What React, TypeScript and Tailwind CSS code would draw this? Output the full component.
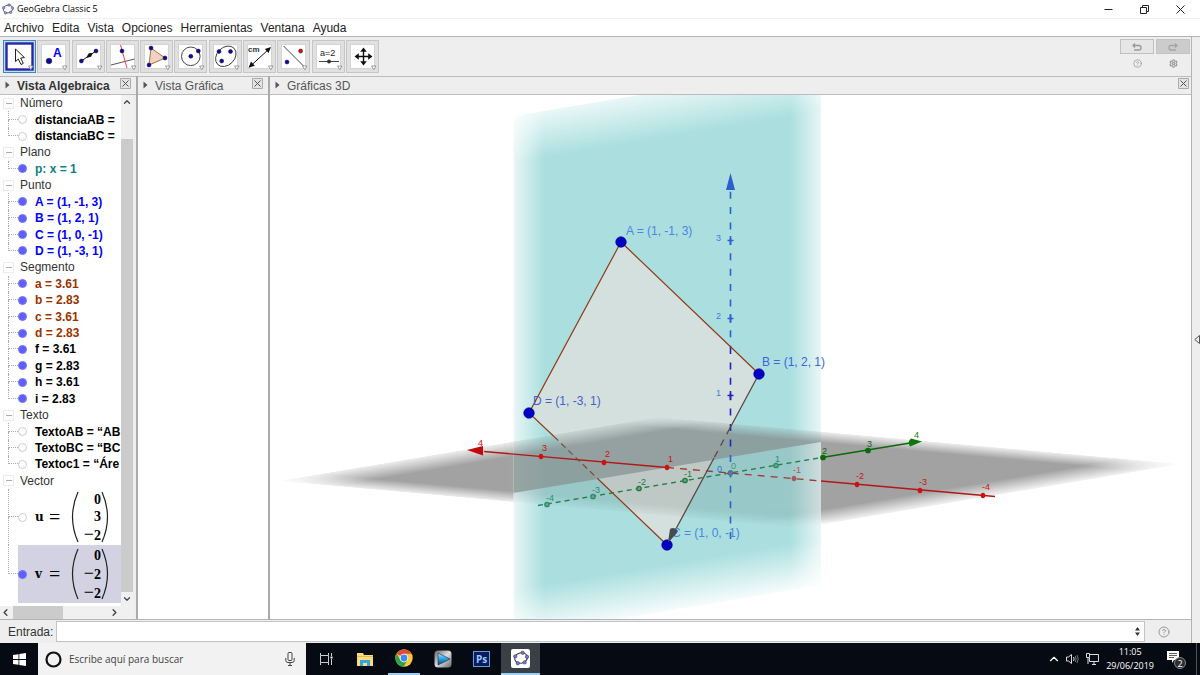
import React from 'react';
import { ChevronDown, ChevronLeft, ChevronRight, ChevronUp, CircleHelp, Settings } from 'lucide-react';

type Item = { text: string; color: string; visible: boolean };
type Group = { name: string; items: Item[] };

const GROUPS: Group[] = [
  {
    name: 'Número',
    items: [
      { text: 'distanciaAB =', color: 'text-black', visible: false },
      { text: 'distanciaBC =', color: 'text-black', visible: false },
    ],
  },
  { name: 'Plano', items: [{ text: 'p: x = 1', color: 'text-[#0c8080]', visible: true }] },
  {
    name: 'Punto',
    items: [
      { text: 'A = (1, -1, 3)', color: 'text-[#0000ff]', visible: true },
      { text: 'B = (1, 2, 1)', color: 'text-[#0000ff]', visible: true },
      { text: 'C = (1, 0, -1)', color: 'text-[#0000ff]', visible: true },
      { text: 'D = (1, -3, 1)', color: 'text-[#0000ff]', visible: true },
    ],
  },
  {
    name: 'Segmento',
    items: [
      { text: 'a = 3.61', color: 'text-[#993300]', visible: true },
      { text: 'b = 2.83', color: 'text-[#993300]', visible: true },
      { text: 'c = 3.61', color: 'text-[#993300]', visible: true },
      { text: 'd = 2.83', color: 'text-[#993300]', visible: true },
      { text: 'f = 3.61', color: 'text-black', visible: true },
      { text: 'g = 2.83', color: 'text-black', visible: true },
      { text: 'h = 3.61', color: 'text-black', visible: true },
      { text: 'i = 2.83', color: 'text-black', visible: true },
    ],
  },
  {
    name: 'Texto',
    items: [
      { text: 'TextoAB = “AB', color: 'text-black', visible: false },
      { text: 'TextoBC = “BC', color: 'text-black', visible: false },
      { text: 'Textoc1 = “Áre', color: 'text-black', visible: false },
    ],
  },
  { name: 'Vector', items: [] },
];

const MENU = ['Archivo', 'Edita', 'Vista', 'Opciones', 'Herramientas', 'Ventana', 'Ayuda'];

const Dot = ({ x, y, color = '#0a0aa8' }: { x: number; y: number; color?: string }) => (
  <circle cx={x} cy={y} r="2" fill={color} stroke="#111" strokeWidth="0.5" />
);

const TOOLS: { name: string; icon: React.ReactNode }[] = [
  {
    name: 'Elige y mueve',
    icon: <path d="M12.5 9 V21.5 L15.3 19 L18 24.5 L20.3 23.4 L17.7 18 L21.5 17.6 Z" fill="#fff" stroke="#222" />,
  },
  {
    name: 'Punto',
    icon: (
      <>
        <circle cx="12" cy="21" r="2.8" fill="#0a0aa8" stroke="#111" strokeWidth="0.5" />
        <text x="16" y="17" fontSize="12" fontWeight="bold" fill="#0000ff">A</text>
      </>
    ),
  },
  {
    name: 'Segmento',
    icon: (
      <>
        <path d="M9.4 21 L24 11" stroke="#111" />
        <path d="M21 13 L16.8 13.2 L14 18 L19 16.8 Z" fill="#111" />
        <Dot x={9.4} y={21} />
        <Dot x={24} y={11} />
      </>
    ),
  },
  {
    name: 'Perpendicular',
    icon: (
      <>
        <path d="M5 25 L28.5 19" stroke="#555" />
        <path d="M14.5 5 L21 28" stroke="#ff4040" />
        <Dot x={16} y={11} />
      </>
    ),
  },
  {
    name: 'Polígono',
    icon: (
      <>
        <path d="M11 8 L25 18 L9 25 Z" fill="#f0d2c2" stroke="#b0694c" />
        <Dot x={11} y={8} />
        <Dot x={25} y={18} />
        <Dot x={9} y={25} />
      </>
    ),
  },
  {
    name: 'Circunferencia',
    icon: (
      <>
        <circle cx="16.8" cy="16.3" r="9.3" fill="none" stroke="#333" strokeWidth="0.9" />
        <Dot x={16.8} y={16.3} />
        <Dot x={24.3} y={11} />
      </>
    ),
  },
  {
    name: 'Elipse',
    icon: (
      <>
        <ellipse cx="16.8" cy="16.3" rx="11.5" ry="8.8" transform="rotate(-45 16.8 16.3)" fill="none" stroke="#333" strokeWidth="0.9" />
        <Dot x={10} y={11.5} />
        <Dot x={21.5} y={11.5} />
        <Dot x={12.7} y={21} />
      </>
    ),
  },
  {
    name: 'Distancia',
    icon: (
      <>
        <path d="M8 25.5 L26 9" stroke="#111" />
        <path d="M5.5 27.8 L8 21.5 L11.8 25.7 Z M28 7 L25.5 13 L21.8 9 Z" fill="#111" />
        <text x="5" y="12" fontSize="8" fontWeight="bold" fill="#333">cm</text>
      </>
    ),
  },
  {
    name: 'Simetría',
    icon: (
      <>
        <path d="M6.5 6 L28.5 28" stroke="#444" />
        <Dot x={10} y={22} />
        <Dot x={23.6} y={11} color="#e01010" />
      </>
    ),
  },
  {
    name: 'Deslizador',
    icon: (
      <>
        <text x="8" y="16" fontSize="9" fill="#222">a=2</text>
        <path d="M7 21.5 H27" stroke="#444" />
        <circle cx="17" cy="21.5" r="1.9" fill="#333" />
      </>
    ),
  },
  {
    name: 'Desplaza vista',
    icon: (
      <>
        <path d="M17.5 10 V23 M11 16.5 H24" stroke="#111" strokeWidth="1.4" />
        <path d="M17.5 7.5 L20.8 11.8 H14.2 Z M17.5 25.5 L20.8 21.2 H14.2 Z M8.5 16.5 L12.8 13.2 V19.8 Z M26.5 16.5 L22.2 13.2 V19.8 Z" fill="#111" />
      </>
    ),
  },
];

const GeoGebraMark = ({ className, dot }: { className: string; dot: string }) => (
  <svg viewBox="0 0 20 20" className={className} aria-hidden="true">
    <ellipse cx="10" cy="10" rx="8" ry="6.5" transform="rotate(-15 10 10)" fill="none" stroke="#444" strokeWidth="1.4" />
    {[[12, 3.5], [17.5, 8.5], [14.5, 15.5], [6, 16.5], [2.8, 8]].map(([x, y]) => (
      <circle key={x} cx={x} cy={y} r="2.1" fill={dot} stroke="#333" strokeWidth="0.7" />
    ))}
  </svg>
);

const TitleBar = () => (
  <header className="flex h-[18px] shrink-0 items-center bg-white pl-0.5">
    <GeoGebraMark className="h-3 w-3" dot="#9999ff" />
    <h1 className="ml-[3px] flex-1 font-['Open_Sans','Noto_Sans',sans-serif] text-[9px] text-black">GeoGebra Classic 5</h1>
    <button aria-label="Minimizar" className="flex w-9 justify-center">
      <svg width="9" height="9"><path d="M0.5 4.5 H8.5" stroke="#222" /></svg>
    </button>
    <button aria-label="Restaurar" className="flex w-9 justify-center">
      <svg width="9" height="9" fill="none" stroke="#222"><path d="M0.5 2.5 H6.5 V8.5 H0.5 Z M2.5 2 V0.5 H8.5 V6.5 H7" /></svg>
    </button>
    <button aria-label="Cerrar" className="mr-0.5 flex w-9 justify-center">
      <svg width="9" height="9"><path d="M0.5 0.5 L8.5 8.5 M8.5 0.5 L0.5 8.5" stroke="#222" /></svg>
    </button>
  </header>
);

const MenuBar = () => (
  <nav className="flex h-[18px] shrink-0 items-center gap-2 border-t border-[#f0f0f0] bg-white pl-1 text-[#222]">
    {MENU.map(m => (
      <button key={m} className="text-[12px] leading-4">{m}</button>
    ))}
  </nav>
);

const Toolbar = () => (
  <div className="flex h-10 shrink-0 items-center justify-between border-t border-[#b4b4b4] pl-[3px] pr-px">
    <div className="flex w-[376px] justify-between">
      {TOOLS.map((tool, i) => (
        <button
          key={tool.name}
          aria-label={tool.name}
          className={
            i === 0
              ? 'h-[33px] w-[33px] border border-[#3c86c4] bg-[#c4dcf0]'
              : 'h-[33px] w-[33px] border border-[#c6c6c6] bg-[#e0e0e0]'
          }
        >
          <svg viewBox="1 1 31 31" className="h-full w-full" fill="none">
            <rect x="4.5" y="4.5" width="24" height="24" fill="#fff" stroke={i === 0 ? 'none' : '#d4d4d4'} />
            {i === 0 && <rect x="3.5" y="3.5" width="26" height="26" fill="#fff" stroke="#2727a8" strokeWidth="2.4" />}
            {tool.icon}
            <path d="M25.5 26 H30 L27.8 29.8 Z" fill="#fff" stroke="#888" strokeWidth="0.8" />
          </svg>
        </button>
      ))}
    </div>
    <div className="grid grid-cols-2 gap-x-0.5 gap-y-px self-start pt-0.5">
      <button aria-label="Deshace" className="flex h-[15px] w-[34px] items-center justify-center border border-[#c0c0c0] bg-[#e6e6e6]">
        <svg width="10" height="8" fill="none" stroke="#999" strokeWidth="1.3"><path d="M3 0.5 L1 2.5 L3 4.5 M1 2.5 H7 Q9 2.5 9 4.7 Q9 7 7 7 H2" /></svg>
      </button>
      <button aria-label="Rehace" className="flex h-[15px] w-[34px] items-center justify-center border border-[#c4c4c4] bg-[#cccccc]">
        <svg width="10" height="8" fill="none" stroke="#a4a4a4" strokeWidth="1.3"><path d="M7 0.5 L9 2.5 L7 4.5 M9 2.5 H3 Q1 2.5 1 4.7 Q1 7 3 7 H8" /></svg>
      </button>
      <button aria-label="Ayuda" className="flex h-4 items-center justify-center text-[#999]"><CircleHelp size={9} /></button>
      <button aria-label="Preferencias" className="flex h-4 items-center justify-center text-[#999]"><Settings size={9} strokeWidth={3} /></button>
    </div>
  </div>
);

const PanelHeader = ({ title, bold, closeClass }: { title: string; bold?: boolean; closeClass: string }) => (
  <div className="flex h-[19px] shrink-0 items-center border-y border-[#bcbcbc] bg-[#eeeeee] pl-[5px]">
    <svg width="5" height="8" className="mb-0.5 mr-[7px]"><path d="M0.5 0.5 L4.5 4 L0.5 7.5 Z" fill="#555" /></svg>
    <h2 className={bold ? 'flex-1 whitespace-nowrap text-[12px] leading-4 font-bold text-[#333]' : 'flex-1 whitespace-nowrap text-[12px] leading-4 text-[#555]'}>{title}</h2>
    <button aria-label={`Cerrar ${title}`} className={closeClass}>
      <svg width="11" height="11" className="mb-1 block"><path d="M0.5 0.5 H10.5 V10.5 H0.5 Z" fill="#e4e4e4" stroke="#aaa" /><path d="M2.5 2.5 L8.5 8.5 M8.5 2.5 L2.5 8.5" stroke="#555" /></svg>
    </button>
  </div>
);

const Connector = ({ last }: { last: boolean }) => (
  <span className="ml-2 flex w-[10px] shrink-0 flex-col self-stretch">
    <span className="h-1/2 border-b border-l border-dotted border-[#aaa]" />
    <span className={last ? 'h-1/2' : 'h-1/2 border-l border-dotted border-[#aaa]'} />
  </span>
);

const Marker = ({ visible, name }: { visible: boolean; name: string }) => (
  <button
    aria-label={`Mostrar ${name}`}
    className={
      visible
        ? 'h-[9px] w-[9px] shrink-0 rounded-full border border-[#7777ee] bg-[#5f5fff]'
        : 'h-[9px] w-[9px] shrink-0 rounded-full border border-[#ccc] bg-white'
    }
  />
);

const Matrix = ({ values }: { values: number[] }) => (
  <span className="flex h-[52px] items-center">
    <svg width="8" height="52" fill="none" stroke="#222" strokeWidth="1.2"><path d="M7 1 Q-4 26 7 51" /></svg>
    <span className="flex w-[22px] flex-col text-right text-[14px] leading-[17px]">
      {values.map((v, i) => (
        <span key={i}>
          {v < 0 && <span className="text-[18px] leading-none font-normal">−</span>}
          {Math.abs(v)}
        </span>
      ))}
    </span>
    <svg width="8" height="52" fill="none" stroke="#222" strokeWidth="1.2"><path d="M1 1 Q12 26 1 51" /></svg>
  </span>
);

const VectorRow = ({ name, values, visible, last }: { name: string; values: number[]; visible: boolean; last: boolean }) => (
  <li className={last ? 'flex h-[58px] items-center' : 'flex h-14 items-center'}>
    <Connector last={last} />
    <span className={last ? 'flex h-full flex-1 items-center bg-[#d2d2e2]' : 'flex h-full flex-1 items-center'}>
      <Marker visible={visible} name={name} />
      <span className="ml-2 flex items-center text-[12px] font-bold text-black">
        <span className="w-3.5 font-['DejaVu_Serif','Liberation_Serif',serif]">{name}</span>
        <span className="w-[22px] font-['Liberation_Serif',serif] text-[20px] leading-4 font-normal">=</span>
        <span className="font-['Liberation_Serif',serif]"><Matrix values={values} /></span>
      </span>
    </span>
  </li>
);

const AlgebraView = () => (
  <section className="flex w-[138px] shrink-0 flex-col border-r-2 border-[#aaaaaa] bg-white">
    <PanelHeader title="Vista Algebraica" bold closeClass="mr-[5px]" />
    <div className="flex min-h-0 flex-1 border-r-3 border-[#eeeeee]">
      <div className="flex min-w-0 flex-1 flex-col">
        <div className="min-h-0 flex-1 overflow-hidden">
          <ul className="grid h-[394px] auto-rows-fr">
            {GROUPS.map(group => (
              <React.Fragment key={group.name}>
                <li className="flex items-center pl-[3px] text-[12px] leading-4 text-[#333]">
                  <button aria-label={`Plegar ${group.name}`} className="flex h-[11px] w-[11px] items-center justify-center border border-[#ececec] bg-white">
                    <span className="h-px w-1.5 bg-[#aaa]" />
                  </button>
                  <span className="ml-1.5">{group.name}</span>
                </li>
                {group.items.map((item, i) => (
                  <li key={item.text} className="flex items-center">
                    <Connector last={i === group.items.length - 1} />
                    <Marker visible={item.visible} name={item.text} />
                    <span className={`ml-2 whitespace-nowrap text-[12px] font-bold leading-4 ${item.color}`}>{item.text}</span>
                  </li>
                ))}
              </React.Fragment>
            ))}
          </ul>
          <ul>
            <VectorRow name="u" values={[0, 3, -2]} visible={false} last={false} />
            <VectorRow name="v" values={[0, -2, -2]} visible last />
          </ul>
        </div>
        <div className="flex h-[13px] shrink-0 items-center bg-[#f0f0f0] text-[#444]">
          <ChevronLeft size={11} strokeWidth={3} className="mr-0.5" />
          <div className="h-full w-[50px] bg-[#cbcbcb]" />
          <ChevronRight size={11} strokeWidth={3} className="ml-auto mr-px" />
        </div>
      </div>
      <div className="flex w-3 shrink-0 flex-col items-center bg-[#f0f0f0] pb-[13px] text-[#444]">
        <ChevronUp size={10} strokeWidth={3} className="my-0.5" />
        <div className="mt-[30px] w-full flex-1 bg-[#cbcbcb]" />
        <ChevronDown size={10} strokeWidth={3} className="my-0.5" />
      </div>
    </div>
  </section>
);

const GraphicsView = () => (
  <section className="flex w-[132px] shrink-0 flex-col border-r-2 border-[#aaaaaa] bg-white">
    <PanelHeader title="Vista Gráfica" closeClass="mr-[5px]" />
  </section>
);

const POINTS = [
  { label: 'A = (1, -1, 3)', x: 621, y: 242, lx: 626, ly: 235, color: '#4a86e0' },
  { label: 'B = (1, 2, 1)', x: 759, y: 374, lx: 762, ly: 366, color: '#3f63e0' },
  { label: 'C = (1, 0, -1)', x: 667, y: 545, lx: 672, ly: 537, color: '#4a86e0' },
  { label: 'D = (1, -3, 1)', x: 529, y: 413, lx: 533, ly: 405, color: '#4a5ccc' },
];

const X_TICKS = [
  { label: '3', x: 541, y: 456, color: '#cc1111' },
  { label: '2', x: 604, y: 462, color: '#cc1111' },
  { label: '1', x: 667, y: 467, color: '#cc1111' },
  { label: '-1', x: 794, y: 478, color: '#a85a5a' },
  { label: '-2', x: 857, y: 484, color: '#cc1111' },
  { label: '-3', x: 920, y: 490, color: '#cc1111' },
  { label: '-4', x: 983, y: 495, color: '#cc1111' },
];

const Y_TICKS = [
  { label: '-4', x: 547, y: 504, color: '#2a8f68' },
  { label: '-3', x: 593, y: 496, color: '#2a8f68' },
  { label: '-2', x: 639, y: 488, color: '#1f7a3c' },
  { label: '-1', x: 685, y: 480, color: '#1f7a3c' },
  { label: '1', x: 776, y: 465, color: '#2a8f68' },
  { label: '2', x: 823, y: 457, color: '#0a6a0a' },
  { label: '3', x: 868, y: 450, color: '#0a6a0a' },
];

const Z_TICKS = [
  { label: '3', y: 240, color: '#2a62cc' },
  { label: '2', y: 318, color: '#2a62cc' },
  { label: '1', y: 395, color: '#2222c0' },
];

// the floor is shaded apart in each region that the wall cuts out of it
const FLOOR_PARTS = [
  { clip: 'url(#outside)', color: '#868686', opacity: 0.76 },
  { clip: 'url(#behind)', color: '#879393', opacity: 0.82 },
  { clip: 'url(#front)', color: '#000000', opacity: 0.1 },
];

const Scene = () => (
  <svg viewBox="270 95 921 524" preserveAspectRatio="xMidYMid slice" className="h-full w-full" fill="none" role="img" aria-label="Gráficas 3D">
    <defs>
      <linearGradient id="fadeX">
        <stop offset="0" stopColor="#fff" stopOpacity="0.28" />
        <stop offset="0.1" stopColor="#fff" />
        <stop offset="0.9" stopColor="#fff" />
        <stop offset="1" stopColor="#fff" stopOpacity="0.28" />
      </linearGradient>
      <linearGradient id="fadeY" x2="0" y2="1">
        <stop offset="0" stopColor="#abdfdf" stopOpacity="0.25" />
        <stop offset="0.09" stopColor="#abdfdf" />
        <stop offset="0.91" stopColor="#abdfdf" />
        <stop offset="1" stopColor="#abdfdf" stopOpacity="0.1" />
      </linearGradient>
      <linearGradient id="floorX">
        <stop offset="0" stopColor="#fff" stopOpacity="0.18" />
        <stop offset="0.11" stopColor="#fff" />
        <stop offset="0.89" stopColor="#fff" />
        <stop offset="1" stopColor="#fff" stopOpacity="0.18" />
      </linearGradient>
      <linearGradient id="floorY" x2="0" y2="1">
        <stop offset="0" stopColor="#fff" stopOpacity="0.18" />
        <stop offset="0.11" stopColor="#fff" />
        <stop offset="0.89" stopColor="#fff" />
        <stop offset="1" stopColor="#fff" stopOpacity="0.12" />
      </linearGradient>
      <mask id="wallMask" maskContentUnits="objectBoundingBox">
        <rect width="1" height="1" fill="url(#fadeX)" />
      </mask>
      <mask id="floorMaskX" maskContentUnits="objectBoundingBox">
        <rect width="1" height="1" fill="url(#floorX)" />
      </mask>
      <mask id="floorMaskY" maskContentUnits="objectBoundingBox">
        <rect width="1" height="1" fill="url(#floorY)" />
      </mask>
      <clipPath id="outside">
        <path d="M270 95 H513.5 V619 H270 Z M821 95 H1191 V619 H821 Z" />
      </clipPath>
      <clipPath id="behind">
        <path d="M513.5 95 H821 V442 L513.5 493 Z" />
      </clipPath>
      <clipPath id="front">
        <path d="M821 442 L513.5 493 V619 H821 Z" />
      </clipPath>
    </defs>

    {/* plane x = 1 and the parallelogram lying in it */}
    <g transform="matrix(1 -0.168 0 1 513.5 116)">
      <rect width="307.5" height="521" fill="url(#fadeY)" mask="url(#wallMask)" />
    </g>
    <path d="M621 242 L759 374 L667 545 L529 413 Z" fill="#d4e0dd" />

    {/* plane xOy */}
    {FLOOR_PARTS.map(part => (
      <g key={part.clip} clipPath={part.clip} opacity={part.opacity}>
        <g transform="matrix(3.8 -0.64 5.24 0.47 278 481)">
          <g mask="url(#floorMaskY)">
            <rect width="100" height="100" fill={part.color} mask="url(#floorMaskX)" />
          </g>
        </g>
      </g>
    ))}

    {/* z axis */}
    <path d="M730.5 191.7 V347" stroke="#2a62cc" strokeWidth="1.6" strokeDasharray="7 8.4" />
    <path d="M730.5 347 V451" stroke="#2222c0" strokeWidth="1.6" strokeDasharray="7 8.4" />
    <path d="M730.5 455 V540" stroke="#2a62cc" strokeWidth="1.6" strokeDasharray="7 8.4" />
    <path d="M730.5 173 L735 190 H726 Z" fill="#2a5fcc" />
    {Z_TICKS.map(t => (
      <g key={t.label}>
        <path d={`M727.5 ${t.y + 0.5} h6 M730.5 ${t.y - 4} v9`} stroke={t.color} strokeWidth="1.6" />
        <text x="716" y={t.y + 1} fontSize="9" fill="#4a78e0">{t.label}</text>
      </g>
    ))}

    {/* x axis */}
    <path d="M484 451.5 L667 467.5" stroke="#b01818" strokeWidth="1.3" />
    <path d="M667 467.5 L821 481" stroke="#a03838" strokeWidth="1.3" strokeDasharray="7 6" />
    <path d="M821 481 L995 496.5" stroke="#b01818" strokeWidth="1.3" />
    <path d="M467 450 L483 446 V455.5 Z" fill="#c00808" />
    <text x="478" y="446" fontSize="9" fill="#cc1111">4</text>
    {X_TICKS.map(t => (
      <g key={t.label}>
        <ellipse cx={t.x} cy={t.y + 0.5} rx="2.3" ry="2.8" fill={t.color} />
        <text x={t.label.length > 1 ? t.x - 1 : t.x + 1} y={t.y - 5} fontSize="9" fill={t.color}>{t.label}</text>
      </g>
    ))}

    {/* y axis */}
    <path d="M538 505.5 L822 457.5" stroke="#24804a" strokeWidth="1.3" strokeDasharray="5 4" />
    <path d="M822 457.5 L910 443" stroke="#0a6a0a" strokeWidth="1.3" />
    <path d="M922 441.5 L911 438.5 Q907 442 910 446.5 Z" fill="#087808" />
    <text x="914" y="438" fontSize="9" fill="#1a7a1a">4</text>
    {Y_TICKS.map(t => (
      <g key={t.label}>
        <circle cx={t.x} cy={t.y + 0.5} r="2.2" fill={t.x > 800 ? t.color : '#6aa08c'} stroke={t.color} strokeWidth="1.3" />
        <text x={t.x - 1} y={t.y - 3} fontSize="9" fill={t.color}>{t.label}</text>
      </g>
    ))}
    <circle cx="730.5" cy="473" r="2.4" fill="#7a7090" stroke="#3a6aa0" />
    <text x="717" y="472" fontSize="9" fill="#3a70dd">0</text>
    <text x="731" y="469" fontSize="9" fill="#4a9080">0</text>

    {/* sides of the parallelogram */}
    <path d="M621 242 L759 374 M621 242 L529 413 L554 436.5 M598 479 L667 545" stroke="#8f3c18" strokeWidth="1.2" />
    <path d="M554 436.5 L598 479" stroke="#7c4c38" strokeWidth="1.2" strokeDasharray="6 4" />
    <path d="M759 374 L730 428 M714 458 L670 540" stroke="#5c4844" strokeWidth="1.3" />
    <path d="M730 428 L714 458" stroke="#5c4844" strokeWidth="1.3" strokeDasharray="7 6" />

    {POINTS.map(p => (
      <g key={p.label}>
        <circle cx={p.x} cy={p.y} r="5.3" fill="#0000c4" stroke="#000090" strokeWidth="0.6" />
        <text x={p.lx} y={p.ly} fontSize="12" fill={p.color}>{p.label}</text>
      </g>
    ))}
    <path d="M668 542 L670 529 Q674 526 678 531 Q677 534 668 542 Z" fill="#464c50" />
  </svg>
);

const View3D = () => (
  <section className="flex min-w-0 flex-1 flex-col bg-white">
    <PanelHeader title="Gráficas 3D" closeClass="mr-0.5" />
    <div className="min-h-0 flex-1 overflow-hidden">
      <Scene />
    </div>
  </section>
);

const InputBar = () => (
  <form className="flex h-6 shrink-0 items-center border-t border-[#b4b4b4] bg-[#eeeeee] pl-2">
    <label htmlFor="entrada" className="w-12 text-[12px] text-[#333]">Entrada:</label>
    <div className="flex h-[21px] min-w-0 flex-1 items-center border border-[#c0c4cc] bg-white pr-1">
      <input id="entrada" type="text" className="h-full min-w-0 flex-1 px-1 text-[12px] outline-none" />
      <svg width="5" height="9"><path d="M2.5 0 L5 3.5 H0 Z M2.5 9 L5 5.5 H0 Z" fill="#333" /></svg>
    </div>
    <button type="button" aria-label="Ayuda de entrada" className="flex w-[46px] justify-center pr-2 text-[#999]">
      <CircleHelp size={12} />
    </button>
  </form>
);

const TASKS = [
  {
    name: 'Vista de tareas',
    button: 'flex h-full w-[39px] items-center justify-center',
    icon: <svg width="14" height="14" fill="none" stroke="#ccc"><path d="M1.5 1 V3.5 H9.5 V1 M1.5 13 V10.5 H9.5 V13 M1.5 3.5 V10.5 M9.5 3.5 V10.5 M12.5 1 V4 M12.5 7 V13" /><path d="M11.5 5.5 H13.5" stroke="#fff" strokeWidth="2" /></svg>,
  },
  {
    name: 'Explorador de archivos',
    button: 'flex h-full w-[39px] items-center justify-center',
    icon: <svg width="18" height="15"><path d="M1 1 H7 L8 3 H17 V14 H1 Z" fill="#fbdc7c" /><path d="M1 4 H17 V5 H1 Z" fill="#e8b84a" /><path d="M4 14 V8 H14 V14 H11 V11 H7 V14 Z" fill="#36a3e0" /></svg>,
  },
  {
    name: 'Chrome',
    button: 'flex h-full w-[39px] items-center justify-center',
    underline: 'h-0.5 w-8 bg-[#9ccff2]',
    icon: (
      <svg width="18" height="18" viewBox="0 0 18 18">
        <circle cx="9" cy="9" r="8.7" fill="#fcc934" />
        <path d="M9 9 L1.5 4.6 A8.7 8.7 0 0 1 16.5 4.8 H9 Z" fill="#e04a3a" />
        <path d="M1.5 4.6 A8.7 8.7 0 0 0 8.6 17.7 L12.5 11 L9 9 L5.4 11 Z" fill="#2ba24c" />
        <circle cx="9" cy="9" r="4.3" fill="#fff" />
        <circle cx="9" cy="9" r="3.4" fill="#4285f4" />
      </svg>
    ),
  },
  {
    name: 'Reproductor',
    button: 'flex h-full w-[39px] items-center justify-center',
    icon: (
      <svg width="18" height="18">
        <defs>
          <linearGradient id="metal" x2="1" y2="1"><stop stopColor="#666" /><stop offset="0.5" stopColor="#ddd" /><stop offset="1" stopColor="#666" /></linearGradient>
          <linearGradient id="play" x2="0" y2="1"><stop stopColor="#b8e8ff" /><stop offset="0.5" stopColor="#28a0e0" /><stop offset="1" stopColor="#0a4c90" /></linearGradient>
        </defs>
        <rect x="0.5" y="0.5" width="17" height="17" rx="3.5" fill="url(#metal)" />
        <path d="M4 3 L16 9 L4 15 Z" fill="url(#play)" stroke="#124" strokeWidth="0.6" />
      </svg>
    ),
  },
  {
    name: 'Photoshop',
    button: 'flex h-full w-[39px] items-center justify-center',
    icon: <span className="flex h-4 w-[17px] items-center justify-center border border-[#5f9fe0] bg-[#0a1c5c] text-[10px] font-bold text-[#9cc8ff]">Ps</span>,
  },
  {
    name: 'GeoGebra',
    button: 'flex h-full w-[39px] items-center justify-center bg-[#3b4046]',
    underline: 'h-0.5 w-full bg-[#9ccff2]',
    icon: <span className="flex h-[19px] w-[19px] items-center justify-center rounded-xs bg-white"><GeoGebraMark className="h-4 w-4" dot="#7777ee" /></span>,
  },
];

const Taskbar = () => (
  <footer className="flex h-8 shrink-0 items-stretch bg-[#060a12] font-['Open_Sans','Noto_Sans',sans-serif]">
    <button aria-label="Inicio" className="flex w-[38px] items-center justify-center">
      <svg width="13" height="13" fill="#fff"><path d="M0 2 L5.5 1.2 V6 H0 Z M6.3 1.1 L13 0 V6 H6.3 Z M0 7 H5.5 V11.8 L0 11 Z M6.3 7 H13 V13 L6.3 12 Z" /></svg>
    </button>
    <div className="flex w-[268px] items-center bg-[#f2f2f2] pl-[7px] pr-[11px]">
      <svg width="17" height="17" fill="none"><circle cx="8.5" cy="8.5" r="7" stroke="#111" strokeWidth="2.2" /></svg>
      <input
        type="search"
        aria-label="Buscar"
        placeholder="Escribe aquí para buscar"
        className="ml-[7px] min-w-0 flex-1 text-[10px] outline-none placeholder:text-[#444]"
      />
      <svg width="10" height="14" fill="none" stroke="#444"><rect x="3" y="0.5" width="4" height="8" rx="1" /><path d="M0.8 6 V8.5 Q0.8 10.5 3 10.5 H7 Q9.2 10.5 9.2 8.5 V6 M5 10.5 V13.5 M3 13.5 H7" /></svg>
    </div>
    {TASKS.map(t => (
      <button key={t.name} aria-label={t.name} className={t.button}>
        <span className="flex h-full w-full flex-col items-center">
          <span className="flex flex-1 items-center justify-center">{t.icon}</span>
          {t.underline && <span className={t.underline} />}
        </span>
      </button>
    ))}
    <div className="ml-auto flex items-center text-white">
      <button aria-label="Iconos ocultos" className="mr-[5px]"><ChevronUp size={14} /></button>
      <button aria-label="Volumen" className="mr-[7px]">
        <svg width="13" height="12" fill="none" stroke="#ddd"><path d="M0.5 4 H2.5 L5.5 1.5 V10.5 L2.5 8 H0.5 Z" /><path d="M7.5 4 Q8.7 6 7.5 8" /><path d="M9.3 3 Q11 6 9.3 9 M11 2 Q13.5 6 11 10" stroke="#777" /></svg>
      </button>
      <button aria-label="Red" className="mr-[7px]">
        <svg width="13" height="12" fill="none" stroke="#ddd"><path d="M4 1.5 H12.5 V8.5 H3.5 V5 M0.5 0.5 H3.5 V4.5 H0.5 Z M2 4.5 V11 M6 11.5 H10 M8 8.5 V11" /></svg>
      </button>
      <time className="flex flex-col text-center text-[9px] leading-[14px]">
        <span>11:05</span>
        <span>29/06/2019</span>
      </time>
      <button aria-label="Notificaciones" className="relative ml-3 mr-2.5">
        <svg width="20" height="20"><path d="M1 2 H13 V11 H8 L6 14 V11 H1 Z" fill="#fff" /><path d="M3 4.5 H11 M3 6.5 H11 M3 8.5 H8" stroke="#333" strokeWidth="0.8" /></svg>
        <span className="absolute bottom-0 right-0 flex h-3 w-3 items-center justify-center rounded-full border border-[#888] bg-[#2a2d32] text-[9px] leading-none">2</span>
      </button>
      <span className="mr-[3px] h-full w-px bg-[#50545a]" />
    </div>
  </footer>
);

const App: React.FC = () => (
  <div className="flex h-screen flex-col overflow-hidden bg-[#eeeeee] font-['Liberation_Sans',Arial,sans-serif]">
    <TitleBar />
    <MenuBar />
    <div className="flex min-h-0 flex-1">
      <main className="flex min-w-0 flex-1 flex-col border-r border-[#b4b4b4]">
        <Toolbar />
        <div className="flex min-h-0 flex-1">
          <AlgebraView />
          <GraphicsView />
          <View3D />
        </div>
        <InputBar />
      </main>
      <aside className="flex w-2 items-center justify-end border-t border-[#b4b4b4]">
        <button aria-label="Abrir panel lateral" className="mb-0.5">
          <svg width="6" height="9"><path d="M5.5 0.5 L0.8 4.5 L5.5 8.5 Z" fill="#eee" stroke="#555" /></svg>
        </button>
      </aside>
    </div>
    <Taskbar />
  </div>
);

export default App;
